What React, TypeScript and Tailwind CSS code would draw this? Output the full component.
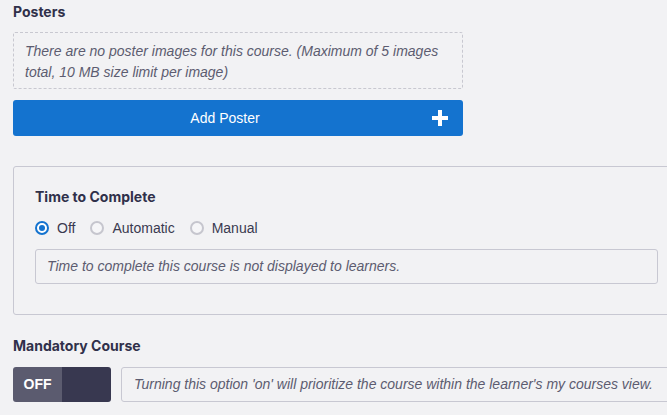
import { useState } from 'react'

type TimeMode = 'off' | 'automatic' | 'manual'

const OPTIONS: { key: TimeMode; label: string }[] = [
  { key: 'off', label: 'Off' },
  { key: 'automatic', label: 'Automatic' },
  { key: 'manual', label: 'Manual' }
]

const heading = "font-['Inter',sans-serif] text-[14px] font-bold leading-[20px] text-[#30304a]"
const body = "font-['Liberation_Sans',Arial,sans-serif]"

function Radio({ checked, label, onClick }: { checked: boolean; label: string; onClick: () => void }) {
  return (
    <button type="button" className="flex items-center gap-[8px]" onClick={onClick}>
      <span
        className={
          checked
            ? 'flex h-[14px] w-[14px] items-center justify-center rounded-full border-2 border-[#1473cf] bg-white'
            : 'h-[14px] w-[14px] rounded-full border-2 border-[#c6c6ce] bg-[#f6f6f8]'
        }
      >
        {checked ? <span className="h-[6px] w-[6px] rounded-full bg-[#1473cf]" /> : null}
      </span>
      <span className={`${body} text-[14px] leading-[20px] text-[#3a3a50]`}>{label}</span>
    </button>
  )
}

export default function App() {
  const [mode, setMode] = useState<TimeMode>('off')
  const [mandatory, setMandatory] = useState(false)

  return (
    <div className="h-[415px] w-[667px] overflow-hidden bg-[#f2f2f4]">
      <div className="w-[680px] pl-[13px] pt-[2px]">
        {/* Posters */}
        <h3 className={heading}>Posters</h3>
        <div className="mt-[10px] h-[57px] w-[450px] rounded-[2px] border border-dashed border-[#c8c8d0] px-[11px] pt-[8px]">
          <p className={`${body} text-[14px] italic leading-[21px] text-[#5c5c70]`}>
            There are no poster images for this course. (Maximum of 5 images total, 10 MB size limit per image)
          </p>
        </div>
        <button
          type="button"
          className="mt-[11px] flex h-[36px] w-[450px] items-center rounded-[3px] bg-[#1473cf] pr-[15px] text-white"
        >
          <span className={`${body} flex-1 pl-[5px] text-center text-[14px]`}>Add Poster</span>
          <svg width="16" height="16" viewBox="0 0 16 16" className="shrink-0">
            <rect x="6" y="0" width="4" height="16" fill="white" />
            <rect x="0" y="6" width="16" height="4" fill="white" />
          </svg>
        </button>

        {/* Time to complete */}
        <section className="mt-[30px] rounded-[3px] border border-[#c8c8d2] px-[21px] pb-[30px] pt-[20px]">
          <h3 className={heading}>Time to Complete</h3>
          <div className="mt-[11px] flex items-center gap-[15px]">
            {OPTIONS.map((o) => (
              <Radio key={o.key} checked={mode === o.key} label={o.label} onClick={() => setMode(o.key)} />
            ))}
          </div>
          <div className="mt-[11px] flex h-[35px] items-center rounded-[3px] border border-[#c8c8d2] px-[11px]">
            <p className={`${body} text-[14px] italic text-[#5c5c70]`}>
              Time to complete this course is not displayed to learners.
            </p>
          </div>
        </section>

        {/* Mandatory */}
        <h3 className={`${heading} mt-[21px]`}>Mandatory Course</h3>
        <div className="mt-[11px] flex gap-[10px]">
          <button
            type="button"
            className="flex h-[35px] w-[98px] shrink-0 overflow-hidden rounded-[3px]"
            onClick={() => setMandatory((v) => !v)}
          >
            <span className="flex w-[49px] items-center justify-center bg-[#5b5b6f] font-['Liberation_Sans',Arial,sans-serif] text-[14px] font-bold text-white">
              {mandatory ? 'ON' : 'OFF'}
            </span>
            <span className="w-[49px] bg-[#383850]" />
          </button>
          <div className="flex h-[35px] flex-1 items-center rounded-[3px] border border-[#c8c8d2] px-[12px]">
            <p className={`${body} text-[14px] italic text-[#5c5c70]`}>
              Turning this option 'on' will prioritize the course within the learner's my courses view.
            </p>
          </div>
        </div>
      </div>
    </div>
  )
}
